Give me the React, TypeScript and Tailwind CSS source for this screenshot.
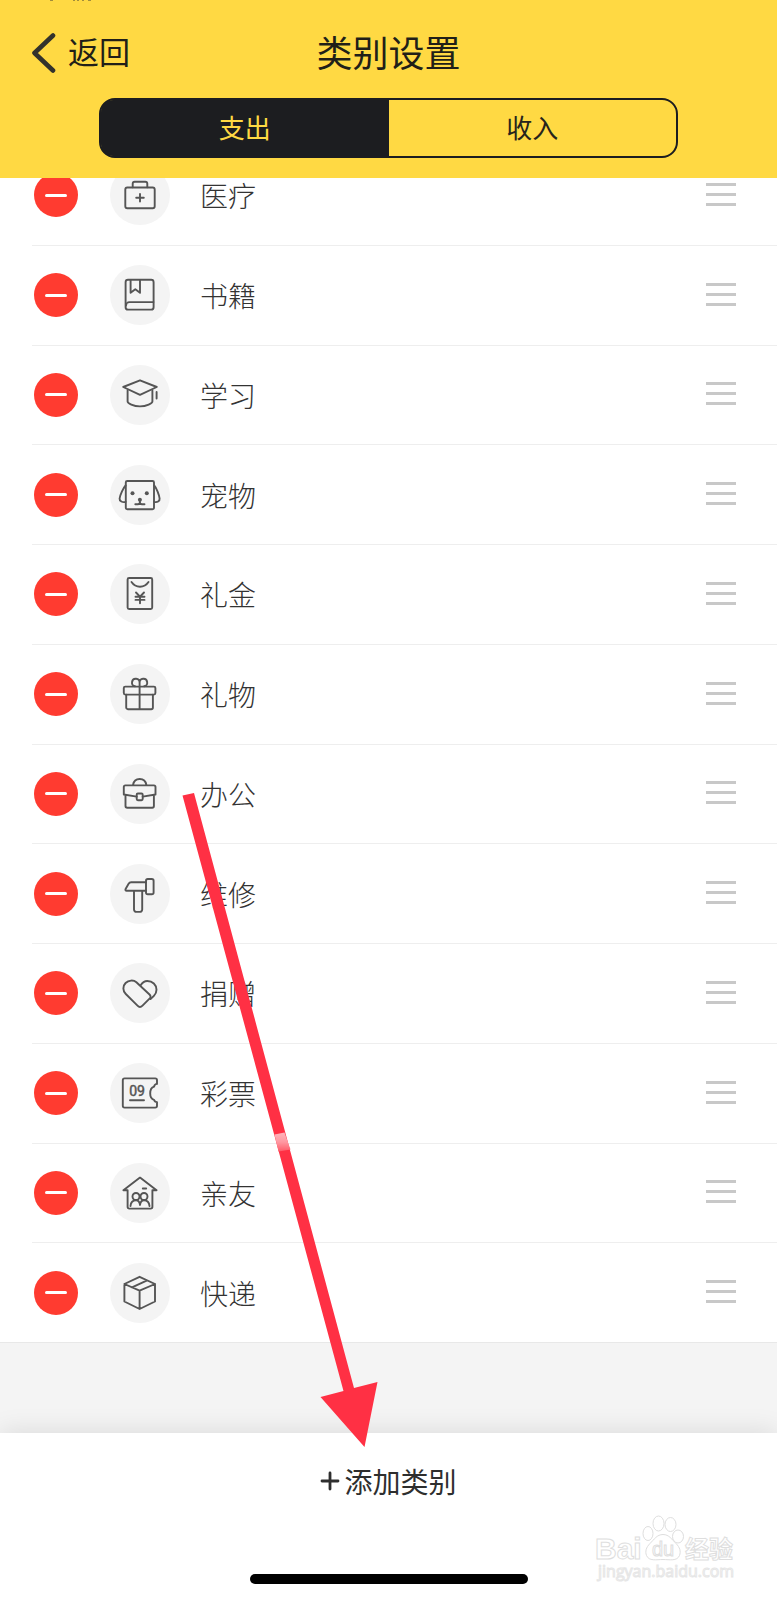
import { ReactNode, useState } from "react";

const FONT = "font-['Noto_Sans_CJK_SC',sans-serif]";

function Glyph({ children }: { children: ReactNode }) {
  return (
    <svg
      viewBox="0 0 60 60"
      className="size-[60px]"
      fill="none"
      stroke="#555555"
      strokeWidth="1.9"
      strokeLinecap="round"
      strokeLinejoin="round"
      aria-hidden="true"
    >
      {children}
    </svg>
  );
}

const categories: { name: string; icon: ReactNode }[] = [
  {
    name: "医疗",
    icon: (
      <>
        <rect x="15.3" y="22.5" width="29.4" height="20.8" rx="2" />
        <path d="M22.7 22.2v-3.4a2 2 0 0 1 2-2h10.6a2 2 0 0 1 2 2v3.4M30 29v7.6M26.2 32.8h7.6" />
      </>
    ),
  },
  {
    name: "书籍",
    icon: (
      <>
        <rect x="15.6" y="14.8" width="28" height="29.8" rx="2.4" />
        <path d="M16 40.5a3.4 3.4 0 0 1 3.4-3.4h24M20.6 15.2v12.6l4.7-3.6 4.7 3.6V15.2" />
      </>
    ),
  },
  {
    name: "学习",
    icon: (
      <>
        <path d="M30 15.3 46.8 22 30 29.8 13.2 22z" />
        <path d="M17.6 25.4v11c0 1.8 5.8 5 12.4 5s12.4-3.2 12.4-5v-11M46.6 27v6.5" />
      </>
    ),
  },
  {
    name: "宠物",
    icon: (
      <>
        <rect x="15.8" y="16" width="28.2" height="28.2" rx="1.5" />
        <path d="M15.6 20.5c-2.3 2.5-5.6 9.5-6 13-.3 2.6 3 4.3 6 3.300M44.2 20.5c2.3 2.5 5 9.5 5.4 13 .3 2.600-2.4 4.300-5.4 3.300M29.9 35v2.300c0 1.300-1 2-2.100 2h-2.500M29.9 37.300c0 1.300 1 2 2.100 2h2.500" />
        <g fill="#555555" stroke="none">
          <circle cx="22.5" cy="28.2" r="2" />
          <circle cx="36.8" cy="28.2" r="2" />
          <circle cx="29.9" cy="34.8" r="2" />
        </g>
      </>
    ),
  },
  {
    name: "礼金",
    icon: (
      <>
        <rect x="17.6" y="14" width="24.6" height="31" rx="1.5" />
        <path d="M21.5 18c2 3 5 4.700 8.500 4.700s6.500-1.700 8.500-4.700M26 28.500l4 4.200 4-4.200M25.500 32.800h9M25.500 35.900h9M30 32.800v6.400" />
      </>
    ),
  },
  {
    name: "礼物",
    icon: (
      <>
        <rect x="13.8" y="22.6" width="31.6" height="8" rx="1.5" />
        <path d="M16.2 30.8v12.7a1.7 1.7 0 0 0 1.7 1.7h23.3a1.7 1.7 0 0 0 1.7-1.7V30.8M29.600 22.600v22.600" />
        <path d="M25 22.300a3.800 3.800 0 1 1 4.600-3.600v3.600M34.200 22.300a3.800 3.800 0 1 0-4.600-3.600" />
      </>
    ),
  },
  {
    name: "办公",
    icon: (
      <>
        <path d="M26.7 32.6 13.8 30.5V23a1.6 1.6 0 0 1 1.6-1.6h28.5a1.6 1.6 0 0 1 1.6 1.6v7.500l-12.800 2.100M15.500 31v11a1.700 1.700 0 0 0 1.700 1.700h25a1.700 1.700 0 0 0 1.700-1.700V31M23 21c.600-3.600 3-6 6.700-6s6.100 2.400 6.700 6" />
        <rect x="26.7" y="29.5" width="6" height="6.8" rx="1.2" />
      </>
    ),
  },
  {
    name: "维修",
    icon: (
      <>
        <path d="M36 18.2H21.2a3 3 0 0 0-2.600 1.500l-3 5.300c-.500 1 0 1.700 1 1.700H36" />
        <rect x="36" y="15" width="7.6" height="15.3" rx="1.8" />
        <path d="M24 27v18.600a2.300 2.300 0 0 0 2.300 2.300h3.600a2.300 2.300 0 0 0 2.300-2.300V27" />
      </>
    ),
  },
  {
    name: "捐赠",
    icon: (
      <>
        <path d="M26.4 19.200 39.500 31.500c1.400 1.400 1.400 2.900 0 4.200l-7 7c-1.800 1.800-3.300 1.800-5 0L15.800 31c-3.200-3.300-3.200-8-.200-11 3-2.900 7.800-3.300 10.800-.800z" />
        <path d="M30.600 22.300c1.200-2 3.800-4.300 6.700-4.300 5.200 0 9.200 3.800 9.200 8.700 0 2.400-1 4.500-2.600 6.100l-3.400 3.300" />
      </>
    ),
  },
  {
    name: "彩票",
    icon: (
      <>
        <path d="M47 20.900v-3.700a1.800 1.800 0 0 0-1.800-1.800H14.600a1.800 1.800 0 0 0-1.800 1.800V42.800a1.800 1.800 0 0 0 1.800 1.800h30.600a1.800 1.800 0 0 0 1.800-1.800v-3.700c-2.200 0-2.600-.900-3-2.300-2.400-.700-3.800-3.300-3.800-6.300s1.400-6.100 3.800-6.800c.400-1.600.800-2.800 3-2.800z" />
        <path d="M20 37.200h14" />
        <text x="19.200" y="33" fontSize="14" fontFamily="Roboto, sans-serif" fill="#555555" stroke="#555555" strokeWidth="0.5">
          09
        </text>
      </>
    ),
  },
  {
    name: "亲友",
    icon: (
      <>
        <path d="M17.6 27.200h-4.200L30 14.600l16.600 12.600h-4.200v16.600a1.800 1.800 0 0 1-1.800 1.800H19.400a1.800 1.800 0 0 1-1.800-1.800zM32.800 25.500h3.400" />
        <circle cx="26" cy="33.500" r="3.500" />
        <circle cx="34" cy="33.500" r="3.500" />
        <path d="M20.5 43c.300-3.500 2.300-5.800 5.500-5.800 2.200 0 3.700 2 4 4.800.300-2.800 1.800-4.800 4-4.800 3.200 0 5.200 2.300 5.500 5.800" />
      </>
    ),
  },
  {
    name: "快递",
    icon: (
      <>
        <path d="M29.600 13.800l15.400 7.200v17.500l-15.400 7.500-15.200-7.500V21zM14.400 21l15.200 6.700L45 21M29.600 27.700v18.100M22 24.300l15.200-6.900" />
      </>
    ),
  },
];

function CategoryRow({ name, icon, last }: { name: string; icon: ReactNode; last: boolean }) {
  return (
    <li
      className={
        last
          ? "flex items-center border-b border-[#e8e8e8] pr-[41px] pl-8"
          : "ml-8 flex items-center border-b border-[#eeeeee] pr-[41px]"
      }
    >
      <button
        type="button"
        aria-label={"删除" + name}
        className="ml-0.5 flex size-11 shrink-0 items-center justify-center rounded-full bg-[#ff3b30]"
      >
        <span className="h-[3px] w-[22px] rounded-full bg-white" />
      </button>
      <span className="ml-8 size-[60px] shrink-0 rounded-full bg-[#f4f4f4]">
        <Glyph>{icon}</Glyph>
      </span>
      <span className="ml-[30px] flex-1 text-[28px] leading-10 font-light text-[#333333]">{name}</span>
      <button type="button" aria-label={"排序" + name} className="flex w-[30px] flex-col gap-[7px] pb-0.5">
        <span className="h-[3px] bg-[#c8c8c8]" />
        <span className="h-[3px] bg-[#c8c8c8]" />
        <span className="h-[3px] bg-[#c8c8c8]" />
      </button>
    </li>
  );
}

function Watermark() {
  return (
    <svg
      viewBox="0 0 150 76"
      className="absolute right-[37px] bottom-3 h-[76px] w-[150px] overflow-visible"
      fill="#ffffff"
      stroke="#dedede"
      strokeWidth="1"
      aria-hidden="true"
    >
      <text x="5" y="47" fontSize="30" fontWeight="700" fontFamily="'Liberation Sans', sans-serif">
        Bai
      </text>
      <ellipse cx="58" cy="21.500" rx="5" ry="7" />
      <ellipse cx="68.500" cy="11.500" rx="5.500" ry="7.500" />
      <ellipse cx="80.500" cy="12.500" rx="5.500" ry="7" />
      <ellipse cx="88" cy="24.500" rx="5.500" ry="6.500" />
      <path d="M73 22.500c6 0 9 5 13 9 4 4 5 8 3.500 12-2.500 6-10 4-16.500 4s-14 2-16.500-4c-1.500-4-.500-8 3.500-12 4-4 7-9 13-9z" />
      <text x="62" y="43.500" fontSize="20" fontFamily="'Liberation Sans', sans-serif">
        du
      </text>
      <text x="95" y="46" fontSize="24" fontWeight="700" fontFamily="'Noto Sans CJK SC', sans-serif">
        经验
      </text>
      <text x="8" y="65" fontSize="16" fontFamily="'Open Sans', sans-serif" stroke="#e6e6e6">
        jingyan.baidu.com
      </text>
    </svg>
  );
}

export default function App() {
  const [tab, setTab] = useState<"out" | "in">("out");
  const on = "flex-1 bg-[#1c1d20] pb-1 text-[#ffd943]";
  const off = "flex-1 pb-1 text-[#26241c]";

  return (
    <div className={`${FONT} relative flex min-h-screen flex-col overflow-hidden bg-[#f4f4f4]`}>
      <header className="relative z-10 bg-[#ffd943] pt-[26px] pb-5 text-[#211f18]">
        <svg viewBox="0 0 44 2" className="absolute top-0 left-[49px] h-0.5 w-11" fill="#a38d3a" aria-hidden="true">
          <path d="M1 0h3v1H1zM24 0h2v1h-2zM28 0h2v1h-2zM33 0h2v1h-2zM39 0h3v1h-3z" />
        </svg>
        <div className="grid grid-cols-[1fr_auto_1fr] items-center">
          <button type="button" className="flex items-center gap-3 pl-8 text-[31px] leading-[50px]">
            <svg viewBox="0 0 24 40" className="mt-1 h-10 w-6" fill="none" stroke="#33322c" strokeWidth="4.600" strokeLinecap="round" strokeLinejoin="round" aria-hidden="true">
              <path d="M21 2.500 2.500 20 21 37.500" />
            </svg>
            返回
          </button>
          <h1 className="text-[36px] leading-[50px]">类别设置</h1>
        </div>
        <div className="mx-[99px] mt-[22px] flex h-[60px] rounded-2xl border-2 border-[#1c1d20] text-[26px]">
          <button type="button" aria-pressed={tab === "out"} onClick={() => setTab("out")} className={`${tab === "out" ? on : off} rounded-l-xl`}>
            支出
          </button>
          <button type="button" aria-pressed={tab === "in"} onClick={() => setTab("in")} className={`${tab === "in" ? on : off} rounded-r-xl`}>
            收入
          </button>
        </div>
      </header>

      <ul className="-mt-8 grid flex-1 auto-rows-fr bg-white">
        {categories.map((c, i) => (
          <CategoryRow key={c.name} name={c.name} icon={c.icon} last={i === categories.length - 1} />
        ))}
      </ul>

      <footer className="relative mt-[90px] flex flex-col items-center bg-white pt-[26px] pb-4 shadow-[0_-2px_24px_rgba(0,0,0,0.1)]">
        <button type="button" className="flex items-center gap-1 text-[28px] leading-[44px] text-[#2e2e2e]">
          <svg viewBox="0 0 20 20" className="size-5" stroke="#2e2e2e" strokeWidth="2.800" strokeLinecap="round" aria-hidden="true">
            <path d="M2 10h16M10 2v16" />
          </svg>
          添加类别
        </button>
        <div className="mt-[71px] h-[10px] w-[278px] rounded-full bg-black" />
        <Watermark />
      </footer>

      <svg viewBox="0 0 200 660" className="pointer-events-none absolute top-[790px] left-[180px] z-20 h-[660px] w-[200px]" aria-hidden="true">
        <defs>
          <linearGradient id="glint" x1="0" y1="0" x2="0" y2="1">
            <stop offset="0" stopColor="#ffb4bb" />
            <stop offset="0.5" stopColor="#ff98a1" />
            <stop offset="1" stopColor="#ff5a68" />
          </linearGradient>
        </defs>
        <path d="M2.500 5.500 14 3 174 598l23.500-6L184.500 657 140.500 607l23-6z" fill="#ff3044" />
        <path d="M94.500 344.500 104.500 342.500 110.500 359.500 98.500 361.500z" fill="url(#glint)" />
      </svg>
    </div>
  );
}
